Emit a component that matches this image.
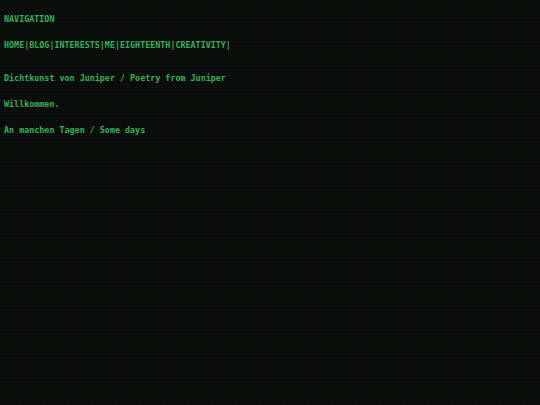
export default function App() {
  const font = { fontFamily: '"DejaVu Sans Mono", "Liberation Mono", monospace' };
  return (
    <div
      className="w-[540px] h-[405px] bg-[#0b0b0b] text-[#2db35a] font-bold text-[8.4px] leading-[10px] pl-[4px] pt-[14px] overflow-hidden"
      style={{
        ...font,
        backgroundImage:
          'linear-gradient(rgba(40,70,40,0.07) 1px, transparent 1px), linear-gradient(90deg, rgba(40,70,40,0.07) 1px, transparent 1px)',
        backgroundSize: '3px 3px',
      }}
    >
      <div>NAVIGATION</div>
      <div className="mt-[16px]">HOME|BLOG|INTERESTS|ME|EIGHTEENTH|CREATIVITY|</div>
      <div className="mt-[23px]">Dichtkunst von Juniper / Poetry from Juniper</div>
      <div className="mt-[16px]">Willkommen.</div>
      <div className="mt-[16px]">An manchen Tagen / Some days</div>
    </div>
  );
}
